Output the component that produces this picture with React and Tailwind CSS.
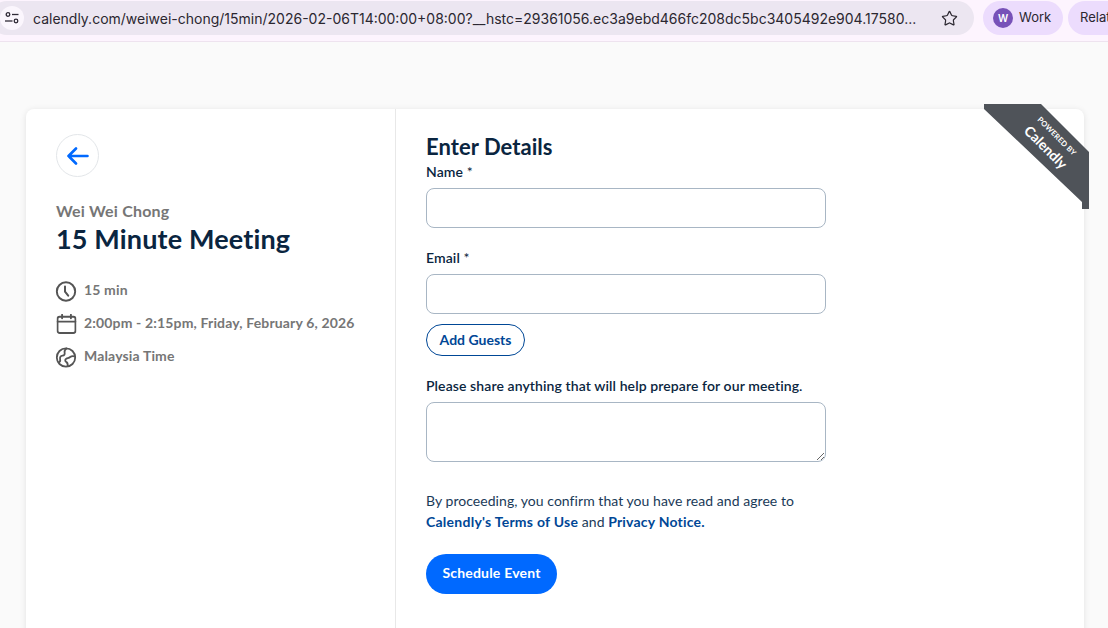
import { Star } from "lucide-react";

const font = { sans: "font-['Lato','Liberation_Sans',sans-serif]" };

function Field({ label, className = "" }) {
  return (
    <div className={className}>
      <label className="block text-[14px] leading-[17px] font-semibold tracking-[0.1px] text-[#0a2540]">
        {label} <span className="font-normal">*</span>
      </label>
      <input className="mt-[8px] block h-10 w-[400px] rounded-lg border border-[#a8b6c4] bg-white" />
    </div>
  );
}

function DetailRow({ icon, children }) {
  return (
    <div className="flex items-center gap-[7px] text-[14px] font-bold leading-[22px] tracking-[0.15px] text-[#767676]">
      <span className="flex h-[22px] w-[21px] shrink-0 -translate-x-[0.5px] items-center justify-center">{icon}</span>
      <span className="-translate-y-[1px]">{children}</span>
    </div>
  );
}

function TuneIcon() {
  return (
    <svg width="16" height="16" viewBox="0 0 16 16" fill="none" stroke="#2f2a36" strokeWidth="1.3">
      <circle cx="4" cy="4.5" r="1.8" />
      <path d="M8 4.5h6.5" />
      <circle cx="12" cy="11" r="1.8" />
      <path d="M1 11h7.5" />
    </svg>
  );
}

function ClockIcon() {
  return (
    <svg width="21" height="21" viewBox="0 0 21 21" fill="none" stroke="#555555" strokeWidth="2" strokeLinecap="round">
      <circle cx="10.500" cy="10.500" r="9.200" />
      <path d="M9.500 5.500v5.200l3.200 4" />
    </svg>
  );
}

function CalendarIcon() {
  return (
    <svg width="20" height="20" viewBox="0 0 20 20" fill="none" stroke="#555555" strokeWidth="1.900" strokeLinecap="round">
      <rect x="1" y="2.800" width="18" height="16.200" rx="2.200" />
      <path d="M1 7.600h18M5.600 0.800v3.400M14.400 0.800v3.400" />
    </svg>
  );
}

function GlobeIcon() {
  return (
    <svg width="21" height="21" viewBox="0 0 21 21" fill="none" stroke="#555555" strokeWidth="1.800" strokeLinecap="round" strokeLinejoin="round">
      <circle cx="10.500" cy="10.500" r="9.200" />
      <path d="M3 15.500c1.500-.5 2-1.800 1.600-3.400C4.200 10.200 5 8.700 7 8.600c1.800-.1 2.500-1.300 2.100-3C8.800 4 9.400 2.500 11 1.400" />
      <path d="M19.500 9.500c-1.800-.7-3.600-.5-4.800.5-1.200 1-2.800 1-4 1.700-1.300.8-1.300 2.500 0 3.200 1.200.6 1.700 1.700 1.500 4.300" />
    </svg>
  );
}

export default function App() {
  return (
    <div className={`relative h-[628px] w-[1108px] overflow-hidden bg-[#fafafa] ${font.sans}`}>
      {/* browser bar */}
      <div className="flex h-[42px] items-start gap-2 overflow-hidden border-b border-[#eee3ef] bg-[#fdf4fe] pt-px font-['Inter',sans-serif]">
        <div className="ml-[-10px] flex h-[34px] w-[984px] shrink-0 items-center rounded-full bg-[#ece6f1] pl-[10px] pr-[16px]">
          <span className="flex h-[24px] w-[24px] shrink-0 items-center justify-center rounded-full bg-[#fbf6fd]">
            <TuneIcon />
          </span>
          <span className="ml-[9px] whitespace-nowrap text-[14px] text-[#2b2730]">
            calendly.com/weiwei-chong/15min/2026-02-06T14:00:00+08:00?__hstc=29361056.ec3a9ebd466fc208dc5bc3405492e904.17580...
          </span>
          <Star className="ml-auto h-[17px] w-[17px] text-[#2b2730]" strokeWidth={1.7} />
        </div>
        <div className="ml-[1px] flex h-[34px] w-[80px] shrink-0 items-center rounded-full bg-[#ecdcfd] pl-[10px]">
          <span className="flex h-5 w-5 items-center justify-center rounded-full bg-[#7751b8] text-[10px] font-semibold text-white">W</span>
          <span className="ml-[6px] text-[13px] text-[#2b2730]">Work</span>
        </div>
        <div className="-ml-[3px] flex h-[34px] w-[80px] shrink-0 items-center rounded-full bg-[#ecdcfd] pl-[12px]">
          <span className="text-[13px] text-[#2b2730]">Relat</span>
        </div>
      </div>

      {/* booking card */}
      <div className="ml-[26px] mt-[67px] flex h-[560px] w-[1058px] rounded-t-lg bg-white shadow-[0_1px_6px_rgba(0,0,0,0.1)]">
        <aside className="w-[370px] shrink-0 border-r border-[#e8e8e8] pl-[30px] pt-[25px]">
          <button className="flex h-[43px] w-[43px] items-center justify-center rounded-full border border-[#e3e6e9] bg-white">
            <svg width="22" height="18" viewBox="0 0 22 18" fill="none" stroke="#0069ff" strokeWidth="2.600" strokeLinecap="round" strokeLinejoin="round">
              <path d="M20.500 9H1.500M9 1.500L1.500 9L9 16.500" />
            </svg>
          </button>
          <p className="mt-[22px] text-[16px] font-bold leading-[24px] tracking-[0.2px] text-[#767676]">Wei Wei Chong</p>
          <h1 className="mt-0 text-[27px] font-bold leading-[32px] tracking-[0.15px] text-[#0a2540]">15 Minute Meeting</h1>
          <div className="mt-[25px] flex flex-col gap-[11px]">
            <DetailRow icon={<ClockIcon />}>15 min</DetailRow>
            <DetailRow icon={<CalendarIcon />}>2:00pm - 2:15pm, Friday, February 6, 2026</DetailRow>
            <DetailRow icon={<GlobeIcon />}>Malaysia Time</DetailRow>
          </div>
        </aside>

        <main className="pl-[30px] pt-[25px]">
          <h2 className="text-[22px] font-bold leading-[26px] tracking-[0.05px] text-[#0a2540]">Enter Details</h2>
          <Field label="Name" className="mt-[3px]" />
          <Field label="Email" className="mt-[21px]" />
          <button className="mt-[10px] block h-8 w-[99px] rounded-full border border-[#004796] pb-[2px] text-[14px] font-bold text-[#004796]">
            Add Guests
          </button>
          <label className="mt-[21px] block text-[14px] leading-[17px] font-semibold tracking-[0.1px] text-[#0a2540]">
            Please share anything that will help prepare for our meeting.
          </label>
          <textarea className="mt-[8px] block h-[60px] w-[400px] rounded-lg border border-[#a8b6c4] bg-white" />
          <p className="mt-[28px] text-[14px] leading-[21px] tracking-[0.05px] text-[#1a3a58]">
            By proceeding, you confirm that you have read and agree to
            <br />
            <a className="font-bold tracking-[0.25px] text-[#004796]">Calendly's Terms of Use</a> and{" "}
            <a className="font-bold tracking-[0.2px] text-[#004796]">Privacy Notice.</a>
          </p>
          <button className="mt-[22px] block h-10 w-[131px] rounded-full bg-[#0069ff] pb-[3px] text-[14px] font-bold tracking-[0.2px] text-white">
            Schedule Event
          </button>
        </main>
      </div>

      {/* powered by ribbon */}
      <div className="absolute left-[984px] top-[104px] h-[105px] w-[105px] overflow-hidden">
        <svg className="absolute inset-0" width="105" height="105" viewBox="0 0 105 105">
          <path d="M0 0H57L105 48V105H98V98L0 5Z" fill="#4f5359" />
        </svg>
        <div className="absolute left-[21px] top-[25px] flex w-[90px] rotate-45 flex-col items-center gap-[2px] text-white">
          <span className="text-[7.500px] font-bold leading-[9px] tracking-[0.2px]">POWERED BY</span>
          <span className="text-[14px] font-bold leading-[17px]">Calendly</span>
        </div>
      </div>
    </div>
  );
}
